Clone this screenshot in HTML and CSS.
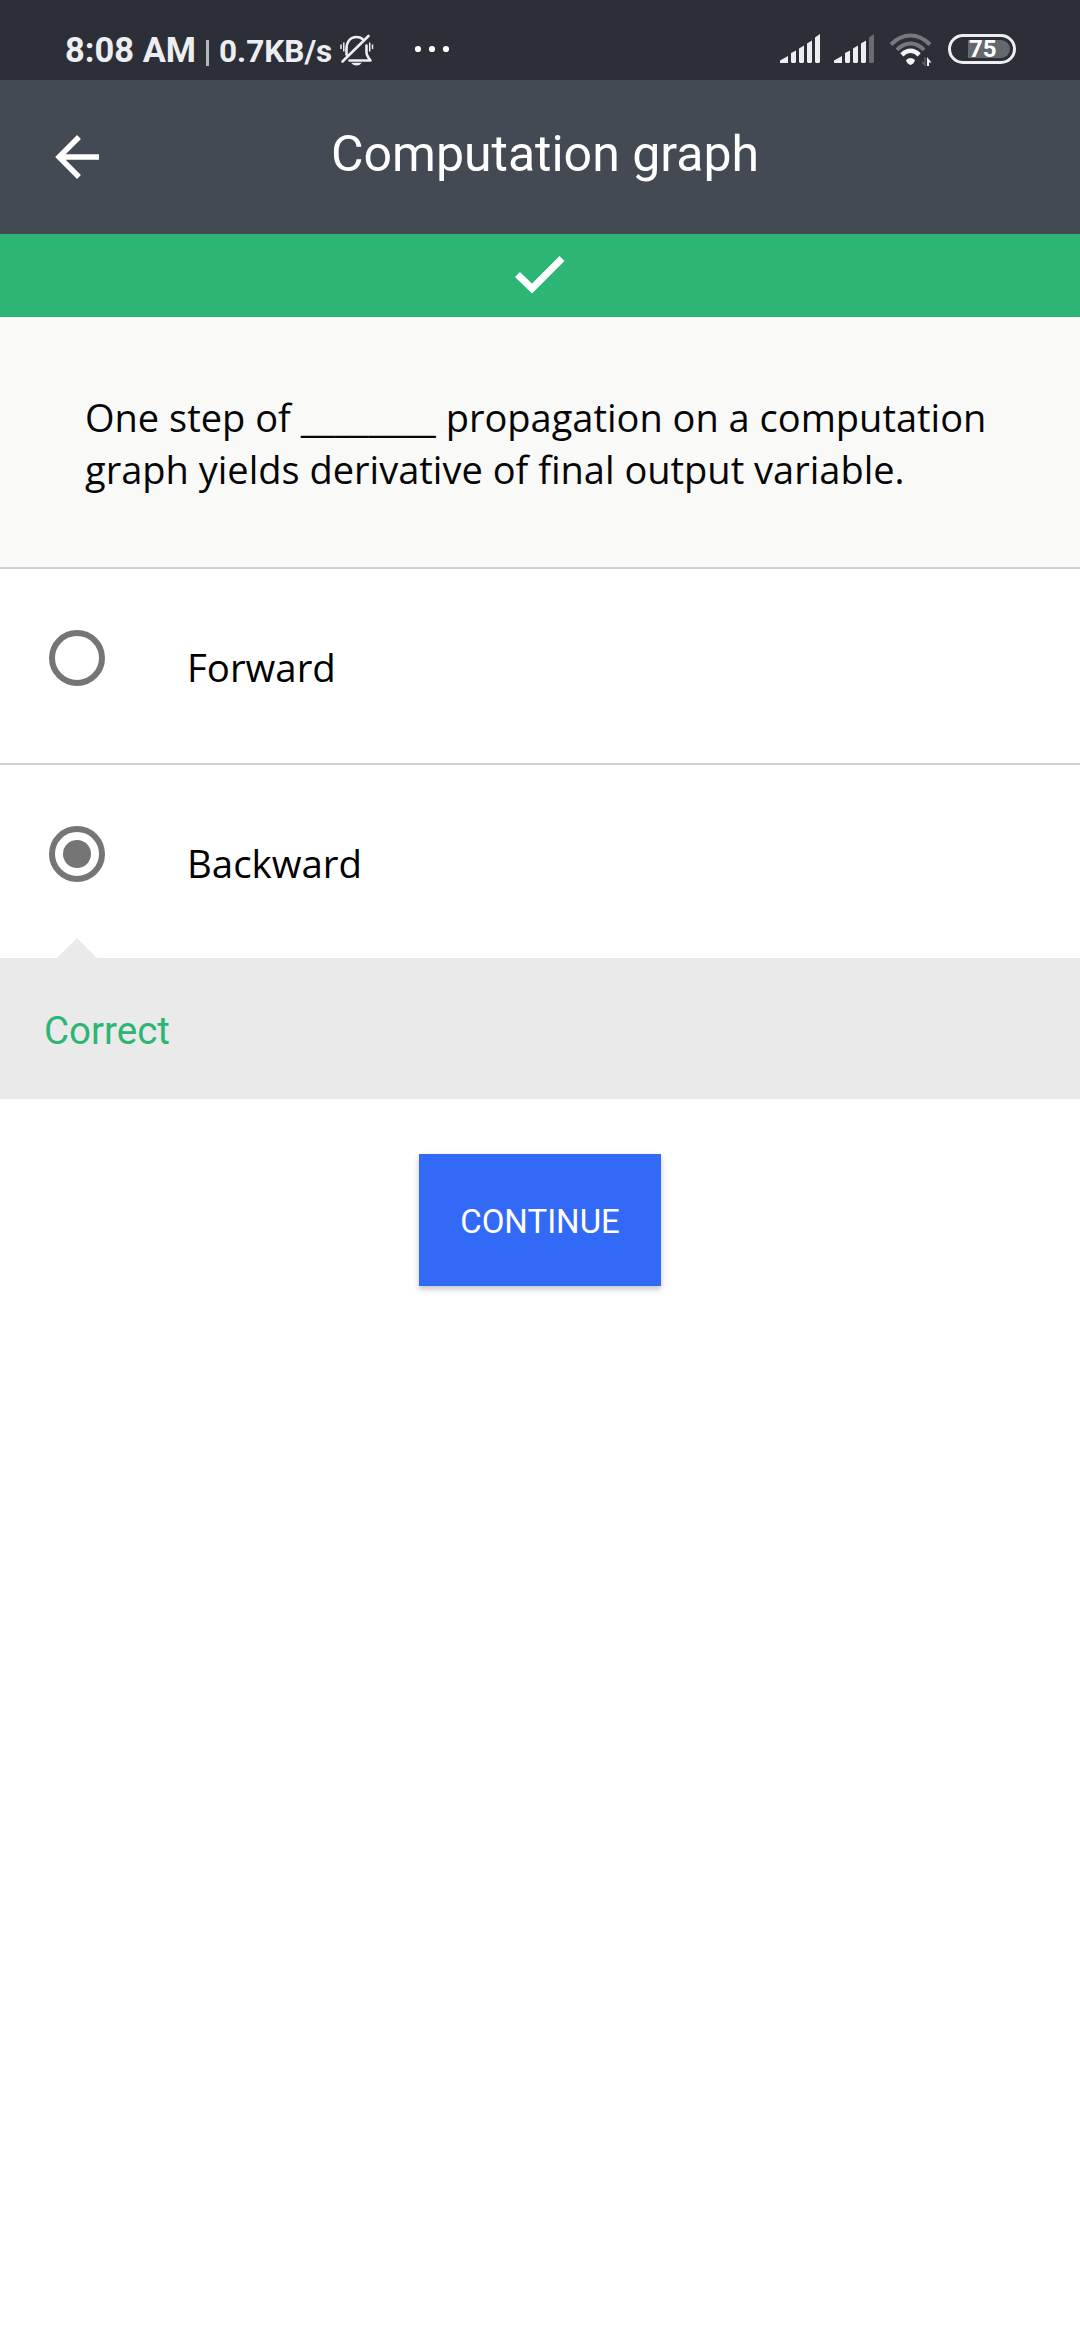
FILE: index.html
```html
<!DOCTYPE html>
<html lang="en">
<head>
<meta charset="utf-8">
<title>Computation graph</title>
<link rel="stylesheet" href="styles.css">
</head>
<body>
<div class="status">
  <span class="clock">8:08 AM</span>
  <span class="divider"></span>
  <span class="speed">0.7KB/s</span>
  <svg class="bell" viewBox="0 0 36 36" width="36" height="36" fill="none" stroke="#eceef1">
    <path d="M3.500 28.500 29.500 3M7.500 21.500V16.500C7.500 9 11 4 17.500 4C20 4 22 4.700 23.500 6M27.500 12.500V19.500C27.500 22.500 29.500 25 31.500 27.500H10.500" stroke-width="2.600" stroke-linecap="round" stroke-linejoin="round"/>
    <path d="M2 11.500V16M4.800 9.500V18.500M30.700 9.500V18.500M33.500 11.500V16" stroke-width="1.500"/>
    <path d="M12 29.800H23Q21 32.500 17.500 32.500T12 29.800Z" fill="#eceef1" stroke="none"/>
  </svg>
  <svg class="dots" viewBox="0 0 36 8" width="36" height="8" fill="#fff"><circle cx="4" cy="4" r="3.100"/><circle cx="18" cy="4" r="3.100"/><circle cx="32" cy="4" r="3.100"/></svg>
  <svg class="signal" viewBox="0 0 40 30" width="40" height="30" fill="#eceef1">
    <path d="M0 26.500 8 22V29H0ZM11 19 16 16.500V28L15 29H12L11 28ZM19 14.500 24 11.500V28L23 29H20L19 28ZM27 9.500 32 6.500V28L31 29H28L27 28Z"/><path d="M35 3.500 40 0V28L39 29H36L35 28Z"/>
  </svg>
  <svg class="signal second" viewBox="0 0 40 30" width="40" height="30" fill="#eceef1">
    <path d="M0 26.500 8 22V29H0ZM11 19 16 16.500V28L15 29H12L11 28ZM19 14.500 24 11.500V28L23 29H20L19 28ZM27 9.500 32 6.500V28L31 29H28L27 28Z"/><path class="dim" d="M35 3.500 40 0V28L39 29H36L35 28Z"/>
  </svg>
  <svg class="wifi" viewBox="0 0 44 34" width="44" height="34" fill="none">
    <path d="M2 11.500Q11 2.500 21.500 2.500T41 11.500M8 17Q14 10.500 21.500 10.500T35 17" stroke="#767a80" stroke-width="4"/>
    <path d="M12.800 21.800Q17 17.800 21.500 17.800T30.200 21.800" stroke="#f2f3f5" stroke-width="4.400"/>
    <path d="M17 27Q21.500 23 26 27Q25 31 21.500 32Q18 31 17 27Z" fill="#f2f3f5"/>
    <path d="M36 24V32L33 29" stroke="#5c6067" stroke-width="1.500"/><path d="M38 33V24L42.500 29.500H40V33Z" fill="#f2f3f5"/>
  </svg>
  <span class="battery"><span class="level">75</span></span>
</div>
<header class="appbar">
  <svg class="back" viewBox="0 0 46 46" width="46" height="46" fill="none" stroke="#fff" stroke-width="5.400"><path d="M25 3 5 23 25 43M5 23H45"/></svg>
  <h1 class="title">Computation graph</h1>
</header>
<div class="result"><svg viewBox="0 0 50 38" width="50" height="38" fill="none" stroke="#fff" stroke-width="7"><path d="M2.500 18.500 17 32.500 47 2.500"/></svg></div>
<main>
  <section class="question">One step of <span class="blank">________</span> propagation on a computation<br>graph yields derivative of final output variable.</section>
  <div class="option"><span class="radio"></span><span class="label">Forward</span></div>
  <div class="option selected"><span class="radio"></span><span class="label">Backward</span></div>
  <div class="feedback">Correct</div>
  <button class="continue">CONTINUE</button>
</main>
</body>
</html>
```

FILE: styles.css
```css
* { box-sizing: border-box; }
body { margin: 0; min-height: 2340px; background: #fff; color: #060606; font-family: Roboto, sans-serif; }
svg { display: block; flex: none; }
.status { height: 80px; background: #2c2f37; color: #eceef1; display: flex; align-items: flex-start; padding: 0 64px 0 65px; font-weight: 700; white-space: nowrap; }
.clock { width: 130px; margin-top: 30px; font-size: 34.500px; line-height: 41px; }
.divider { width: 3px; height: 26px; margin: 40px 0 0 11px; background: #b5b7bb; }
.speed { width: 113px; margin: 31px 0 0 10px; font-size: 31.500px; line-height: 41px; }
.bell { margin: 33px 0 0 7px; }
.dots { margin: 45px 0 0 39px; }
.signal { margin: 34px 0 0 auto; }
.signal.second { margin-left: 14px; }
.dim { fill: #696c72; }
.wifi { margin: 33px 0 0 15px; }
.battery { width: 68px; height: 30px; margin: 34px 0 0 15px; border: 3px solid #eceef1; border-radius: 15px; padding: 3px 3px 3px 17px; }
.level { display: block; height: 18px; border-radius: 0 9px 9px 0; background: #65686e; color: #fff; font-size: 24px; line-height: 18px; padding-left: 1px; }
.appbar { height: 154px; background: #444a53; display: flex; align-items: flex-start; padding-left: 54px; color: #fff; }
.back { margin-top: 54px; }
.title { margin: 44px 0 0 231px; font-size: 50px; line-height: 60px; font-weight: 400; white-space: nowrap; }
.result { height: 83px; background: #2cb574; display: flex; justify-content: center; padding-top: 22px; }
.question { height: 252px; padding: 74px 0 0 85px; background: #f9f9f8; border-bottom: 2px solid #d2d2d2; font: 38px/52px "Open Sans", sans-serif; white-space: nowrap; }
.blank { font-size: 39px; line-height: 1; letter-spacing: -.2px; }
.option { height: 196px; border-bottom: 2px solid #d2d2d2; display: flex; align-items: flex-start; padding: 61px 0 0 49px; }
.option.selected { height: 193px; border-bottom: 0; }
.radio { width: 56px; height: 56px; border: 6px solid #757575; border-radius: 50%; display: flex; align-items: center; justify-content: center; }
.selected .radio::after { content: ""; width: 28px; height: 28px; border-radius: 50%; background: #757575; }
.label { margin: 11px 0 0 82px; font: 38.400px/52px "Open Sans", sans-serif; color: #000; }
.feedback { position: relative; height: 141px; background: #eaeaea; color: #2cb574; padding: 47px 0 0 44px; font-size: 38.500px; line-height: 52px; }
.feedback::before { content: ""; position: absolute; left: 57px; top: -20px; width: 40px; height: 20px; background: #eaeaea; clip-path: polygon(50% 0, 100% 100%, 0 100%); }
.continue { display: block; width: 242px; height: 132px; margin: 55px 0 0 419px; padding: 4px 0 0; border: 0; background: #3269f6; color: #fff; font: 33px/40px Roboto, sans-serif; box-shadow: 0 3px 6px rgba(0,0,0,.24); }
```
